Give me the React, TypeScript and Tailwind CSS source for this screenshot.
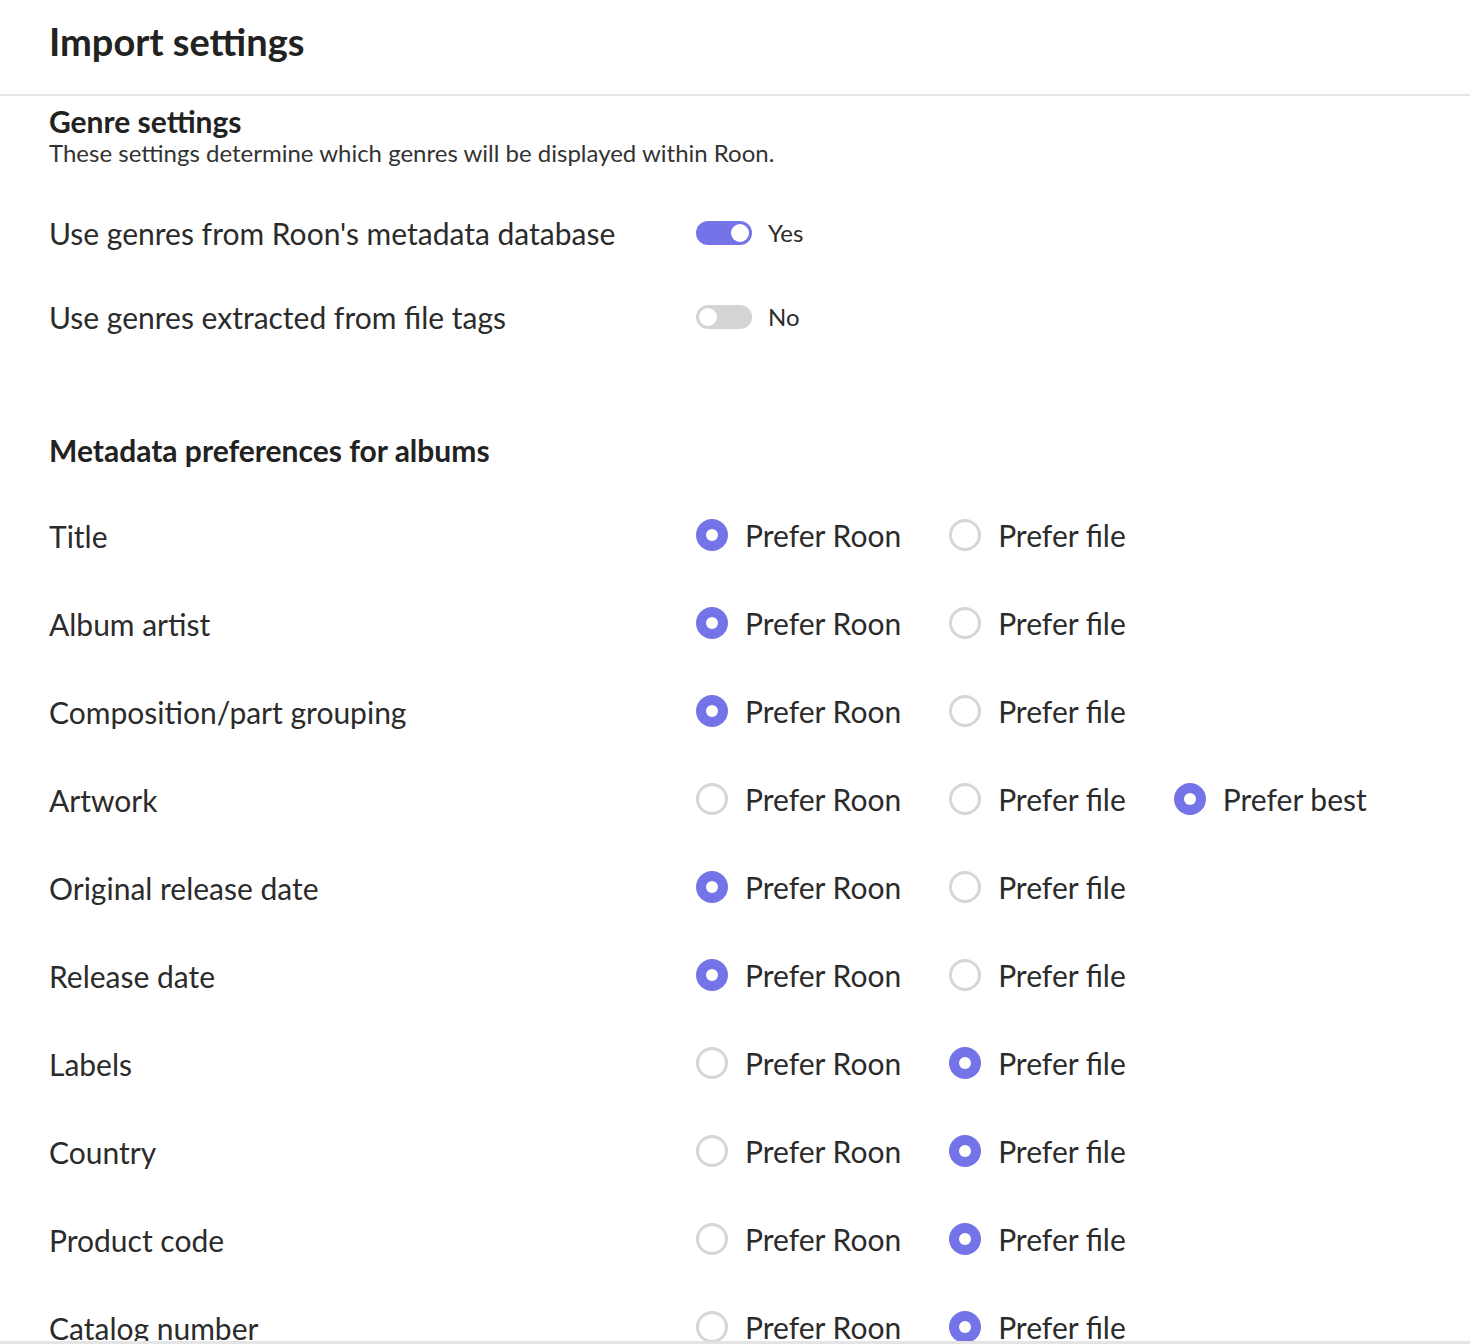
import { useState } from "react";

type Choice = "roon" | "file" | "best";

const ROWS: { label: string; value: Choice; best?: boolean }[] = [
    { label: "Title", value: "roon" },
    { label: "Album artist", value: "roon" },
    { label: "Composition/part grouping", value: "roon" },
    { label: "Artwork", value: "best", best: true },
    { label: "Original release date", value: "roon" },
    { label: "Release date", value: "roon" },
    { label: "Labels", value: "file" },
    { label: "Country", value: "file" },
    { label: "Product code", value: "file" },
    { label: "Catalog number", value: "file" },
];

function Toggle({ on, onChange }: { on: boolean; onChange: () => void }) {
    return (
        <button
            onClick={onChange}
            className={`w-[56px] h-[24px] rounded-full p-[3px] flex items-center ${on ? "bg-[#7474e8] justify-end" : "bg-[#d4d4d4] justify-start"}`}
        >
            <span className="w-[18px] h-[18px] rounded-full bg-white" />
        </button>
    );
}

function Radio({ checked, label, onClick }: { checked: boolean; label: string; onClick: () => void }) {
    return (
        <button onClick={onClick} className="flex items-center gap-[17px]">
            {checked ? (
                <span className="w-[32px] h-[32px] rounded-full bg-[#7474e8] flex items-center justify-center">
                    <span className="w-[12px] h-[12px] rounded-full bg-white" />
                </span>
            ) : (
                <span className="w-[32px] h-[32px] rounded-full border-[3px] border-[#d6d6d6]" />
            )}
            <span className="text-[30px] text-[#2b2b2b]">{label}</span>
        </button>
    );
}

export default function App() {
    const [roonGenres, setRoonGenres] = useState(true);
    const [fileGenres, setFileGenres] = useState(false);
    const [prefs, setPrefs] = useState<Choice[]>(ROWS.map((r) => r.value));

    const pick = (i: number, c: Choice) => setPrefs(prefs.map((p, j) => (j === i ? c : p)));

    return (
        <div className="h-[1344px] overflow-hidden flex flex-col bg-white text-[#2b2b2b]" style={{ fontFamily: "Lato, 'Noto Sans', sans-serif" }}>
            {/* Header */}
            <div className="h-[96px] shrink-0 border-b-2 border-[#e4e4e4] px-[49px] pt-[15px]">
                <h1 className="text-[38px] font-bold text-[#222] leading-[52px]">Import settings</h1>
            </div>

            <div className="flex-1 overflow-hidden px-[49px]">
                {/* Genre settings */}
                <div className="pt-[7px]">
                    <h2 className="text-[30px] font-bold text-[#222] leading-[36px]">Genre settings</h2>
                    <p className="text-[24px] leading-[28px] text-[#333]">These settings determine which genres will be displayed within Roon.</p>
                </div>

                <div className="mt-[42px] flex flex-col gap-[36px]">
                    <div className="flex items-center h-[48px]">
                        <div className="w-[647px] text-[30px]">Use genres from Roon's metadata database</div>
                        <Toggle on={roonGenres} onChange={() => setRoonGenres(!roonGenres)} />
                        <span className="ml-[16px] text-[24px]">{roonGenres ? "Yes" : "No"}</span>
                    </div>
                    <div className="flex items-center h-[48px]">
                        <div className="w-[647px] text-[30px]">Use genres extracted from file tags</div>
                        <Toggle on={fileGenres} onChange={() => setFileGenres(!fileGenres)} />
                        <span className="ml-[16px] text-[24px]">{fileGenres ? "Yes" : "No"}</span>
                    </div>
                </div>

                {/* Metadata preferences */}
                <h2 className="mt-[89px] text-[30px] font-bold text-[#222] leading-[40px]">Metadata preferences for albums</h2>

                <div className="mt-[41px] flex flex-col gap-[40px]">
                    {ROWS.map((row, i) => (
                        <div key={row.label} className="flex items-center h-[48px]">
                            <div className="w-[647px] text-[30px] pt-[2px]">{row.label}</div>
                            <div className="flex items-center gap-[48px]">
                                <Radio checked={prefs[i] === "roon"} label="Prefer Roon" onClick={() => pick(i, "roon")} />
                                <Radio checked={prefs[i] === "file"} label="Prefer file" onClick={() => pick(i, "file")} />
                                {row.best && (
                                    <Radio checked={prefs[i] === "best"} label="Prefer best" onClick={() => pick(i, "best")} />
                                )}
                            </div>
                        </div>
                    ))}
                </div>
            </div>

            <div className="h-[3px] shrink-0 bg-[#e4e4e4]" />
        </div>
    );
}
